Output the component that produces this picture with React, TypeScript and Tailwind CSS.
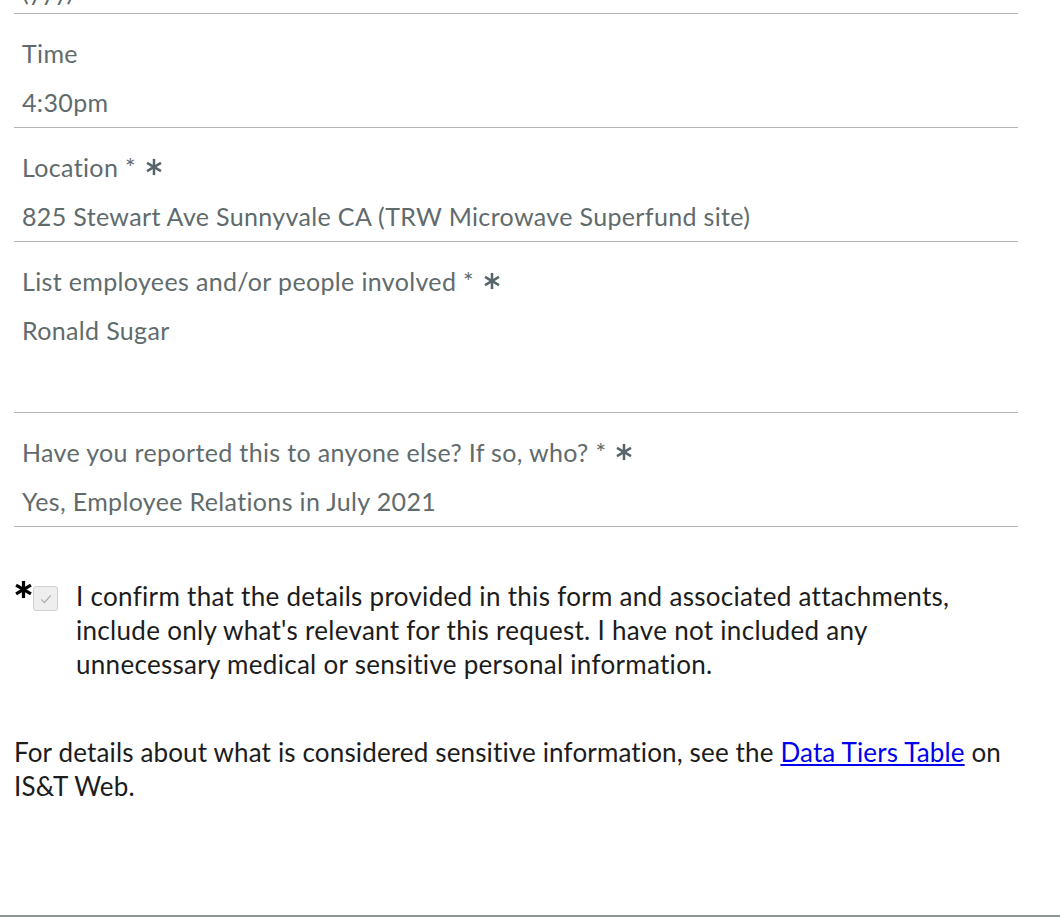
import React from 'react';

const font = { fontFamily: "Lato, 'Open Sans', sans-serif" };

function Asterisk({ className, stroke = 3 }: { className?: string; stroke?: number }) {
  return (
    <svg viewBox="0 0 20 20" className={className} aria-hidden>
      <g stroke="currentColor" strokeWidth={stroke} strokeLinecap="butt">
        <line x1="10" y1="1" x2="10" y2="19" />
        <line x1="2.2" y1="5.5" x2="17.8" y2="14.5" />
        <line x1="2.2" y1="14.5" x2="17.8" y2="5.5" />
      </g>
    </svg>
  );
}

interface FieldProps {
  label: string;
  value: string;
  required?: boolean;
  tall?: boolean;
}

function Field({ label, value, required, tall }: FieldProps) {
  return (
    <div className="border-b border-[#b3b5b5] pt-[22px] pb-[8px] px-2 text-[#5f6b6c] text-[25px] tracking-[0.35px]">
      <div className="flex items-center h-[34px] whitespace-nowrap">
        <span>{label}</span>
        {required && <Asterisk className="ml-[9px] w-[18px] h-[18px] text-[#58656a]" stroke={2.8} />}
      </div>
      <div className={tall ? 'mt-[15px] h-[91px]' : 'mt-[15px] h-[34px]'}>{value}</div>
    </div>
  );
}

export default function App() {
  return (
    <div className="w-[1060px] h-[922px] bg-white overflow-hidden leading-[34px]" style={font}>
      <div className="mx-[14px] w-[1004px]">
        {/* previous field, clipped off the top */}
        <div className="border-b border-[#b3b5b5] h-[14px] overflow-hidden px-2 text-[#5f6b6c] text-[25px]">
          <div className="-mt-[26px]">(yyy)</div>
        </div>
        <Field label="Time" value="4:30pm" />
        <Field label="Location *" value="825 Stewart Ave Sunnyvale CA (TRW Microwave Superfund site)" required />
        <Field label="List employees and/or people involved *" value="Ronald Sugar" required tall />
        <Field label="Have you reported this to anyone else? If so, who? *" value="Yes, Employee Relations in July 2021" required />

        <div className="mt-[52px] flex items-start text-[#1c1c1c] text-[26px] tracking-[0.3px]">
          <Asterisk className="w-[19px] h-[19px] text-black mt-[1px] shrink-0" stroke={3.4} />
          <div className="mt-[7px] w-[25px] h-[25px] shrink-0 rounded-[3px] border border-[#cfd1d1] bg-[#eeeeee] flex items-center justify-center">
            <svg viewBox="0 0 20 20" className="w-[16px] h-[16px]" aria-hidden>
              <path d="M4 10.5 L8 14.5 L16 5.5" fill="none" stroke="#a9abab" strokeWidth="1.6" />
            </svg>
          </div>
          <p className="ml-[18px]">
            I confirm that the details provided in this form and associated attachments, include only what's relevant for this request. I have not included any unnecessary medical or sensitive personal information.
          </p>
        </div>

        <p className="mt-[54px] text-[#1c1c1c] text-[26px] tracking-[0.15px]">
          For details about what is considered sensitive information, see the{' '}
          <a href="#" className="text-[#0000ee] underline">Data Tiers Table</a> on IS&amp;T Web.
        </p>
      </div>
      <div className="mt-[112px] border-t-2 border-[#8f9595]" />
    </div>
  );
}
